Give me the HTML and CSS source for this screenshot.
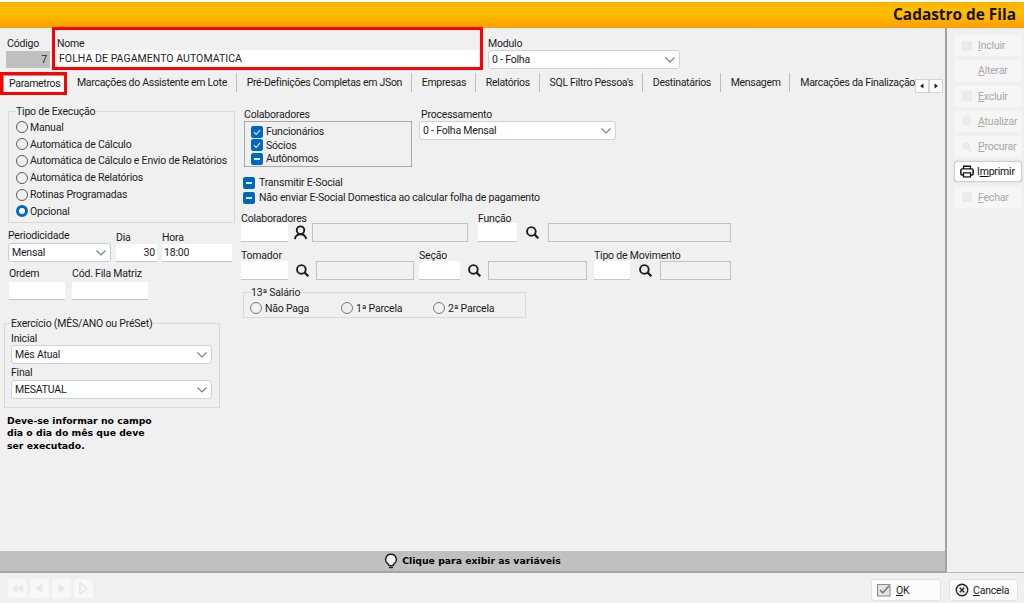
FILE: index.html
```html
<!DOCTYPE html>
<html lang="pt">
<head>
<meta charset="utf-8">
<title>Cadastro de Fila</title>
<link rel="stylesheet" href="styles.css">
</head>
<body>
<svg class="defs" aria-hidden="true">
  <symbol id="chev" viewBox="0 0 12 8"><path d="M1.5 1.5 6 6l4.5-4.5" fill="none" stroke="#7a7a7a" stroke-width="1.1"/></symbol>
  <symbol id="check" viewBox="0 0 12 12"><path d="M3 6.3 5.2 8.4 9.2 3.8" fill="none" stroke="#cfe3f5" stroke-width="1.2"/></symbol>
  <symbol id="lens" viewBox="0 0 16 16"><circle cx="6.8" cy="6.8" r="4.6" fill="none" stroke="#1c1c1c" stroke-width="2"/><path d="M10.2 10.2 14.2 14.2" stroke="#1c1c1c" stroke-width="2.4"/></symbol>
  <symbol id="lens-off" viewBox="0 0 16 16"><circle cx="6.5" cy="6.5" r="5" fill="#ececec" stroke="#e8e8e8" stroke-width="2"/><path d="M10.2 10.2 14.2 14.2" stroke="#e8e8e8" stroke-width="2.4"/></symbol>
</svg>
<div class="window">
  <div class="topline"></div>
  <header class="titlebar"><h1>Cadastro de Fila</h1></header>
  <div class="body">
    <main class="main">
      <div class="head">
        <div class="f f-codigo"><label>Código</label><div class="input gray">7</div></div>
        <div class="f name-box"><label>Nome</label><div class="input name-input">FOLHA DE PAGAMENTO AUTOMATICA</div></div>
        <div class="f f-modulo"><label>Modulo</label><div class="select s-modulo">0 - Folha<svg class="chev"><use href="#chev"/></svg></div></div>
      </div>
      <nav class="tabbar">
        <div class="tabs">
          <span class="tab active">Parametros</span>
          <span class="tab">Marcações do Assistente em Lote</span>
          <span class="tab">Pré-Definições Completas em JSon</span>
          <span class="tab">Empresas</span>
          <span class="tab">Relatórios</span>
          <span class="tab">SQL Filtro Pessoa's</span>
          <span class="tab">Destinatários</span>
          <span class="tab">Mensagem</span>
          <span class="tab last">Marcações da Finalização</span>
        </div>
        <div class="tab-arrows">
          <span class="arr"><svg viewBox="0 0 6 6"><path d="M4.500.5v5L1 3Z" fill="#222"/></svg></span>
          <span class="arr"><svg viewBox="0 0 6 6"><path d="M1.500.5v5L5 3Z" fill="#222"/></svg></span>
        </div>
      </nav>
      <div class="panel">
        <section class="col-left">
          <fieldset class="group g-tipo">
            <legend>Tipo de Execução</legend>
            <div class="opt"><i class="radio"></i>Manual</div>
            <div class="opt"><i class="radio"></i>Automática de Cálculo</div>
            <div class="opt"><i class="radio"></i>Automática de Cálculo e Envio de Relatórios</div>
            <div class="opt"><i class="radio"></i>Automática de Relatórios</div>
            <div class="opt"><i class="radio"></i>Rotinas Programadas</div>
            <div class="opt"><i class="radio on"></i>Opcional</div>
          </fieldset>
          <div class="row r-per">
            <div class="f"><label class="l-up">Periodicidade</label><div class="select s-per">Mensal<svg class="chev"><use href="#chev"/></svg></div></div>
            <div class="f f-low"><label>Dia</label><div class="input right w41">30</div></div>
            <div class="f f-low"><label>Hora</label><div class="input w70">18:00</div></div>
          </div>
          <div class="row r-ord">
            <div class="f"><label>Ordem</label><div class="input w56"></div></div>
            <div class="f"><label>Cód. Fila Matriz</label><div class="input w76"></div></div>
          </div>
          <fieldset class="group g-exer">
            <legend>Exercício (MÊS/ANO ou PréSet)</legend>
            <label>Inicial</label>
            <div class="select s-ex">Mês Atual<svg class="chev"><use href="#chev"/></svg></div>
            <label class="l-final">Final</label>
            <div class="select s-ex">MESATUAL<svg class="chev"><use href="#chev"/></svg></div>
          </fieldset>
          <p class="note">Deve-se informar no campo<br>dia o dia do mês que deve<br>ser executado.</p>
        </section>
        <section class="col-mid">
          <div class="row r-colab">
            <div class="f"><label class="l-col">Colaboradores</label>
              <div class="colab-box">
                <div class="chk"><i class="cb"><svg><use href="#check"/></svg></i>Funcionários</div>
                <div class="chk"><i class="cb"><svg><use href="#check"/></svg></i>Sócios</div>
                <div class="chk"><i class="cb dash"></i>Autônomos</div>
              </div>
            </div>
            <div class="f f-proc"><label>Processamento</label><div class="select s-proc">0 - Folha Mensal<svg class="chev"><use href="#chev"/></svg></div></div>
          </div>
          <div class="esocial">
            <div class="chk"><i class="cb dash"></i>Transmitir E-Social</div>
            <div class="chk"><i class="cb dash"></i>Não enviar E-Social Domestica ao calcular folha de pagamento</div>
          </div>
          <div class="lookups l1">
            <div class="lk"><label>Colaboradores</label><div class="lk-c">
              <div class="input w47"></div>
              <span class="ic c24"><svg class="ic-user" viewBox="0 0 16 16"><circle cx="8" cy="5.5" r="4" fill="none" stroke="#1c1c1c" stroke-width="2"/><path d="M2 15c.5-3.4 2.6-5.2 6-5.2s5.500 1.800 6 5.200" fill="none" stroke="#1c1c1c" stroke-width="2"/></svg></span>
              <div class="ro w156"></div></div></div>
            <div class="lk m10"><label>Função</label><div class="lk-c">
              <div class="input w39"></div>
              <span class="ic c31"><svg class="ic-lens"><use href="#lens"/></svg></span>
              <div class="ro w183"></div></div></div>
          </div>
          <div class="lookups l2">
            <div class="lk"><label>Tomador</label><div class="lk-c">
              <div class="input w47"></div>
              <span class="ic c28"><svg class="ic-lens"><use href="#lens"/></svg></span>
              <div class="ro w98"></div></div></div>
            <div class="lk m5"><label>Seção</label><div class="lk-c">
              <div class="input w41"></div>
              <span class="ic c28"><svg class="ic-lens"><use href="#lens"/></svg></span>
              <div class="ro w99"></div></div></div>
            <div class="lk m7"><label>Tipo de Movimento</label><div class="lk-c">
              <div class="input w36"></div>
              <span class="ic c30"><svg class="ic-lens"><use href="#lens"/></svg></span>
              <div class="ro w71"></div></div></div>
          </div>
          <fieldset class="group g-13">
            <legend>13ª Salário</legend>
            <div class="opt o91"><i class="radio"></i>Não Paga</div>
            <div class="opt o92"><i class="radio"></i>1ª Parcela</div>
            <div class="opt"><i class="radio"></i>2ª Parcela</div>
          </fieldset>
        </section>
      </div>
      <div class="varbar">
        <svg class="bulb" viewBox="0 0 14 16"><path d="M7 1.200a5.300 5.300 0 0 0-3 9.700c.6.500.8 1 .9 1.700h4.200c.1-.7.3-1.200.9-1.700a5.300 5.300 0 0 0-3-9.700Z" fill="#f4f4f4" stroke="#1a1a1a" stroke-width="1.400"/><path d="M5 14.500h4" stroke="#1a1a1a" stroke-width="1.400"/></svg>
        <span>Clique para exibir as variáveis</span>
      </div>
    </main>
    <aside class="side">
      <div class="btn off"><i class="sq"></i><span><u>I</u>ncluir</span></div>
      <div class="btn off"><svg class="bi" viewBox="0 0 12 12"><path d="M1 11 2 8 8 2l2 2-6 6Z" fill="#f6f6f6"/></svg><span><u>A</u>lterar</span></div>
      <div class="btn off"><i class="sq"></i><span><u>E</u>xcluir</span></div>
      <div class="btn off"><i class="sq round"></i><span><u>A</u>tualizar</span></div>
      <div class="btn off"><svg class="bi"><use href="#lens-off"/></svg><span><u>P</u>rocurar</span></div>
      <div class="btn on"><svg class="print" viewBox="0 0 16 14"><path d="M4 4V1h8v3" fill="none" stroke="#111" stroke-width="1.500"/><rect x="1" y="4" width="14" height="7" rx="1.500" fill="none" stroke="#111" stroke-width="1.700"/><rect x="4" y="8.500" width="8" height="4.700" fill="#fff" stroke="#111" stroke-width="1.400"/></svg><span>I<u>m</u>primir</span></div>
      <div class="btn off"><i class="sq"></i><span><u>F</u>echar</span></div>
    </aside>
  </div>
  <footer class="footer">
    <div class="nav">
      <span class="nb"><svg viewBox="0 0 14 14"><path d="M7 2 1 7l6 5ZM13 2 7 7l6 5Z" fill="#e9e9e9"/></svg></span>
      <span class="nb"><svg viewBox="0 0 14 14"><path d="M10 2 3 7l7 5Z" fill="#e9e9e9"/></svg></span>
      <span class="nb"><svg viewBox="0 0 14 14"><path d="M4 2l7 5-7 5Z" fill="#e9e9e9"/></svg></span>
      <span class="nb"><svg viewBox="0 0 14 14"><path d="M3 1v12l8-6Z" fill="none" stroke="#e9e9e9" stroke-width="2"/></svg></span>
    </div>
    <div class="actions">
      <div class="fbtn b-ok"><svg viewBox="0 0 14 14"><rect x=".5" y="1.500" width="12.500" height="11.500" fill="#e4e4e4" stroke="#8a8a8a"/><path d="M3 7l2.800 2.800L12 3" fill="none" stroke="#6f6f6f" stroke-width="1.300"/></svg><span><u>O</u>K</span></div>
      <div class="fbtn b-can"><svg viewBox="0 0 16 16"><circle cx="8" cy="8" r="6.600" fill="#e8e8e8" stroke="#222" stroke-width="1.500"/><path d="M5.500 5.500l5 5m0-5-5 5" stroke="#222" stroke-width="1.500"/></svg><span><u>C</u>ancela</span></div>
    </div>
  </footer>
</div>
</body>
</html>
```

FILE: styles.css
```css
* { box-sizing: border-box; }
html, body { margin: 0; padding: 0; }
body { background: #f0f0f0; font: 10.5px/13px Roboto, "Open Sans", sans-serif; letter-spacing: -0.2px; color: #1c1c1c; overflow: hidden; }
.defs { position: absolute; width: 0; height: 0; }
.window { width: 1024px; height: 603px; display: flex; flex-direction: column; }
.topline { height: 2px; background: #fff; flex: none; }
.titlebar { height: 26px; flex: none; display: flex; align-items: center; justify-content: flex-end; padding-right: 8px;
  background: linear-gradient(#ffb000, #ffc000 40%, #ff9d00); }
.titlebar h1 { margin: 0; font: bold 15.4px/26px "Open Sans", sans-serif; letter-spacing: 0; color: #151000; }
.body { flex: 1; display: flex; min-height: 0; }
.main { width: 945px; flex: none; display: flex; flex-direction: column; }
label { display: block; white-space: nowrap; }
.f { display: flex; flex-direction: column; }

.input { height: 18px; background: #fff; border-bottom: 1px solid #c4c4c4; padding: 0 2px; line-height: 17px; white-space: nowrap; }
.right { text-align: right; }
.gray { background: #c0c0c0; text-align: right; padding-right: 3px; }
.ro { height: 19px; background: #f0f0f0; border: 1px solid #c2c2c2; }
.select { position: relative; height: 19px; background: #fff; border: 1px solid #cdd3d8; border-radius: 3px; padding-left: 3px; line-height: 17px; }
.chev { position: absolute; right: 3px; top: 5px; width: 12px; height: 8px; }

.head { height: 42px; flex: none; display: flex; align-items: flex-start; padding-left: 6px; }
.f-codigo { width: 46px; margin-top: 9px; }
.f-codigo label { padding-left: 1px; height: 14px; }
.f-codigo .input { width: 44px; height: 17px; border: 0; }
.name-box { width: 431px; height: 43px; margin-top: -1px; border: 3px solid #f00; padding: 7px 0 0 2px; }
.name-box label { height: 13px; }
.name-input { width: 422px; height: 17px; border: 0; padding-left: 2px; letter-spacing: 0.05px; }
.f-modulo { margin: 9px 0 0 5px; }
.f-modulo label { height: 13px; }
.s-modulo { width: 192px; }

.tabbar { height: 25px; flex: none; display: flex; align-items: flex-start; }
.tabs { width: 915px; height: 25px; overflow: hidden; display: flex; align-items: center; white-space: nowrap; letter-spacing: -0.3px; }
.tab { flex: none; padding: 0 8.7px 0 10px; height: 19px; line-height: 19px; border-right: 1px solid #bdbdbd; }
.tab.active { width: 67px; height: 23px; margin-top: 1px; border: 3px solid #f00; padding: 0 0 0 6px; line-height: 17px; background: #fafafa; box-shadow: inset 1px 1px 0 #9a9a9a; }
.tab.last { border-right: 0; }
.tab-arrows { display: flex; margin-top: 9px; }
.arr { width: 14px; height: 14px; background: #fff; border: 1px solid #d4d4d4; display: flex; align-items: center; justify-content: center; }
.arr svg { width: 6px; height: 6px; }

.panel { flex: 1; min-height: 0; display: flex; padding-top: 10px; padding-left: 4px; }
.col-left { width: 236px; flex: none; }
.col-mid { flex: 1; padding-top: 3px; }
.group { margin: 0; border: 1px solid #d9d9d9; min-width: 0; }
legend { padding: 0; margin-left: 0; line-height: 13px; }
.g-tipo { width: 227px; height: 118px; margin-left: 4px; padding: 1px 0 0 7px; }
.opt { display: flex; align-items: center; height: 16.8px; white-space: nowrap; }
.radio { width: 12px; height: 12px; border: 1px solid #5a5a5a; border-radius: 50%; margin-right: 2px; flex: none; }
.radio.on { border: 3.5px solid #0067c0; background: #fff; }
.row { display: flex; }
.r-per { margin: 6px 0 0 4px; gap: 5px; }
.r-per label { height: 14px; }
.r-per .f-low { padding-top: 1px; }
.r-per .f-low label { height: 14px; padding-top: 1px; }
.s-per { width: 103px; border-color: #bcd0e4; }
.w36 { width: 36px; } .w39 { width: 39px; } .w41 { width: 41px; } .w47 { width: 47px; }
.w56 { width: 56px; } .w70 { width: 70px; } .w71 { width: 71px; } .w76 { width: 76px; }
.w98 { width: 98px; } .w99 { width: 99px; } .w156 { width: 156px; } .w183 { width: 183px; }
.r-ord { margin: 5px 0 0 5px; gap: 7px; }
.r-ord label { height: 15px; }
.g-exer { width: 216px; height: 91px; margin-top: 17px; padding: 2px 0 0 6px; }
.g-exer label { height: 13px; }
.g-exer .l-final { height: 15px; margin-top: 1px; padding-top: 1px; }
.s-ex { width: 201px; }
.note { margin: 7px 0 0 3px; font: bold 9.3px/12.3px "DejaVu Sans", sans-serif; letter-spacing: 0; color: #000; white-space: nowrap; }

.r-colab { margin-left: 4px; }
.l-col { height: 13px; }
.colab-box { width: 168px; height: 46px; border: 1px solid #a8a8a8; padding: 3px 0 0 6px; }
.chk { display: flex; align-items: center; height: 13.5px; white-space: nowrap; }
.cb { width: 12px; height: 12px; background: #0067c0; border-radius: 2px; margin-right: 3px; flex: none; position: relative; }
.cb svg { display: block; width: 12px; height: 12px; }
.cb.dash::after { content: ""; position: absolute; left: 3px; right: 3px; top: 5px; height: 2px; background: #dcebf7; }
.f-proc { margin-left: 7px; }
.f-proc label { padding-left: 2px; height: 13px; }
.s-proc { width: 197px; }
.esocial { margin: 8px 0 0 3px; }
.esocial .chk { height: 15px; }
.esocial .cb { margin-right: 4px; }
.lookups { display: flex; margin-left: 1px; }
.l1 { margin-top: 7px; }
.l2 { margin-top: 7px; }
.l1 label { height: 11px; line-height: 13px; }
.l2 label { height: 12px; line-height: 14px; }
.lk-c { display: flex; align-items: center; }
.lk-c .input { height: 19px; }
.m10 { margin-left: 10px; } .m5 { margin-left: 5px; } .m7 { margin-left: 7px; }
.ic { display: flex; justify-content: center; align-items: center; flex: none; }
.c24 { width: 24px; } .c28 { width: 28px; } .c30 { width: 30px; } .c31 { width: 31px; }
.ic-user, .ic-lens { width: 15px; height: 15px; }
.g-13 { width: 283px; height: 32px; margin: 6px 0 0 3px; padding: 1px 0 0 6px; display: flex; }
.g-13 legend { margin-left: 1px; }
.g-13 .radio { margin-right: 3px; border-color: #777; }
.o91 { width: 91px; } .o92 { width: 92px; }

.varbar { height: 22px; flex: none; background: #c0c0c0; border-bottom: 2px solid #a4a4a4; display: flex; align-items: center; justify-content: center; gap: 4px; font: bold 9.3px/20px "DejaVu Sans", sans-serif; letter-spacing: 0; color: #000; }
.bulb { width: 14px; height: 16px; }

.side { width: 79px; flex: none; border-left: 2px solid #a0a0a0; border-bottom: 1px solid #bdbdbd; padding: 7px 0 0 7px; display: flex; flex-direction: column; gap: 4.3px; }
.btn { width: 68px; height: 21px; flex: none; border-radius: 3px; display: flex; align-items: center; padding-left: 8px; }
.btn.off { background: #f6f6f6; color: #a8a8a8; }
.btn.on { background: #fff; border: 1px solid #d0d0d0; box-shadow: 0 0 1px #999; padding-left: 5px; color: #111; }
.sq { width: 10px; height: 10px; background: #ebebeb; margin-right: 6px; flex: none; }
.sq.round { border-radius: 50%; }
.bi { width: 10px; height: 10px; margin-right: 6px; flex: none; }
.print { width: 14px; height: 13px; margin-right: 3px; flex: none; }

.footer { height: 30px; flex: none; display: flex; justify-content: space-between; padding: 6px 6px 0 8px; }
.nav { display: flex; gap: 3px; }
.nb { width: 19px; height: 19px; background: #f8f8f8; border-radius: 3px; display: flex; align-items: center; justify-content: center; }
.nb svg { width: 13px; height: 13px; }
.actions { display: flex; gap: 8px; }
.fbtn { height: 22px; background: #fbfbfb; border: 1px solid #e2e2e2; border-radius: 3px; display: flex; align-items: center; }
.b-ok { width: 70px; padding-left: 5px; gap: 5px; }
.b-can { width: 69px; padding-left: 5px; gap: 4px; }
.fbtn svg { width: 14px; height: 14px; }
```
